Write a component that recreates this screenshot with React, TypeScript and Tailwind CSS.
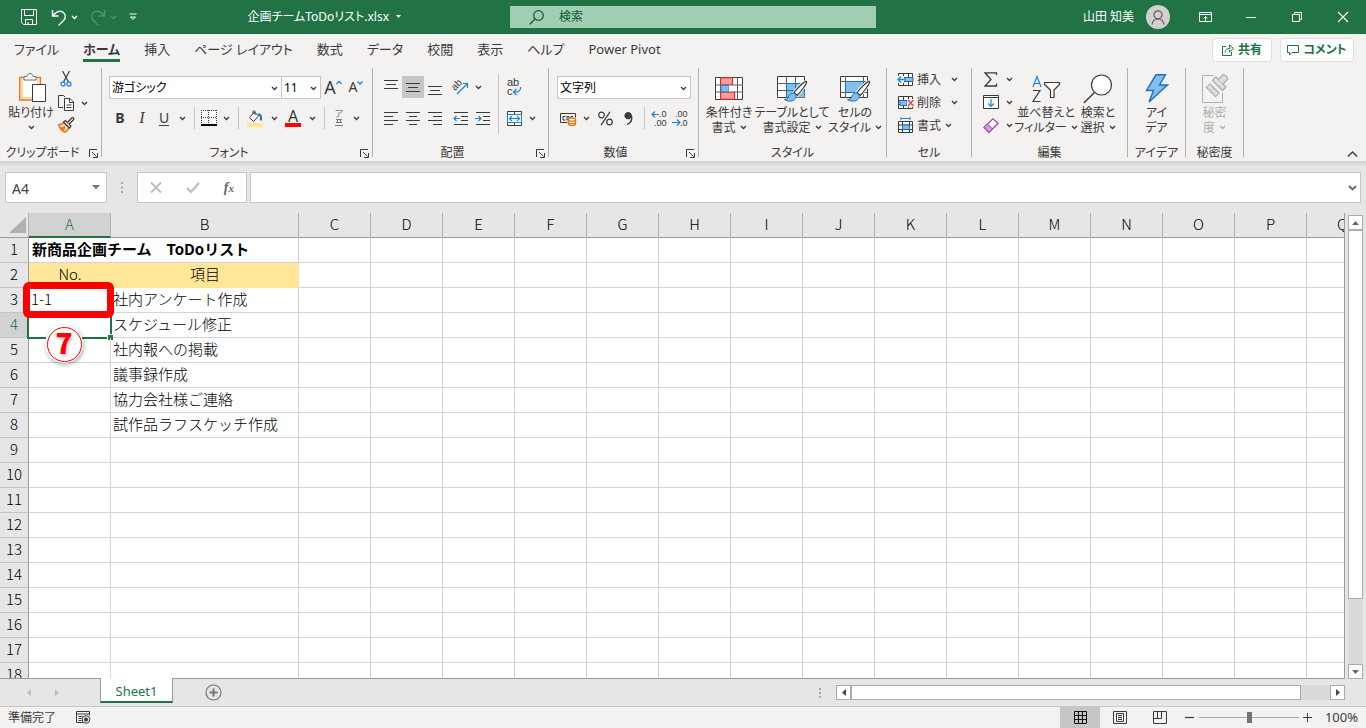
import React, { useState, ReactNode } from 'react';

interface CellRow {
  no: string;
  item: string;
}

const COLUMNS = ['A', 'B', 'C', 'D', 'E', 'F', 'G', 'H', 'I', 'J', 'K', 'L', 'M', 'N', 'O', 'P', 'Q'];

const TABS = ['ファイル', 'ホーム', '挿入', 'ページ レイアウト', '数式', 'データ', '校閲', '表示', 'ヘルプ', 'Power Pivot'];

const TASKS: CellRow[] = [
  { no: '1-1', item: '社内アンケート作成' },
  { no: '', item: 'スケジュール修正' },
  { no: '', item: '社内報への掲載' },
  { no: '', item: '議事録作成' },
  { no: '', item: '協力会社様ご連絡' },
  { no: '', item: '試作品ラフスケッチ作成' },
];

/* ---------- shared bits ---------- */

interface SvgProps {
  w: number;
  h: number;
  className?: string;
  children: ReactNode;
}

const Svg: React.FC<SvgProps> = ({ w, h, className = '', children }) => (
  <svg
    width={w}
    height={h}
    viewBox={`0 0 ${w} ${h}`}
    fill="none"
    stroke="#3b3a39"
    className={`shrink-0 overflow-visible font-['Liberation_Sans',sans-serif] ${className}`}
    aria-hidden="true"
  >
    {children}
  </svg>
);

const Chevron: React.FC<{ className?: string }> = ({ className = '' }) => (
  <svg width="7" height="5" viewBox="0 0 7 5" fill="none" stroke="currentColor" strokeWidth="1.3" className={`shrink-0 ${className}`} aria-hidden="true">
    <path d="M1 1l2.5 2.5L6 1" />
  </svg>
);

const ChevronButton: React.FC<{ label: string }> = ({ label }) => (
  <button type="button" aria-label={label} className="flex h-[22px] w-3.5 items-center justify-center">
    <Chevron />
  </button>
);

interface IconButtonProps {
  label: string;
  active?: boolean;
  className?: string;
  children: ReactNode;
}

const IconButton: React.FC<IconButtonProps> = ({ label, active, className = 'w-[22px]', children }) => (
  <button
    type="button"
    aria-label={label}
    className={`flex h-[22px] shrink-0 items-center justify-center ${active ? 'bg-[#c8c6c4]' : ''} ${className}`}
  >
    {children}
  </button>
);

const Divider = () => (
  <span className="flex w-2.5 justify-center">
    <span className="h-[22px] w-px bg-[#c8c6c4]" />
  </span>
);

interface GroupProps {
  label: string;
  className: string;
  launcher?: boolean;
  children: ReactNode;
}

const Group: React.FC<GroupProps> = ({ label, className, launcher, children }) => (
  <>
    <section aria-label={label} className={`flex shrink-0 flex-col ${className}`}>
      <div className="flex h-[75px]">{children}</div>
      <div className="relative flex h-[18px] items-center justify-center pt-0.5 whitespace-nowrap">
        <span className={launcher ? 'pr-4' : ''}>{label}</span>
        {launcher && (
          <button type="button" aria-label={`${label}の設定`} className="absolute right-[3px] top-1.5">
            <Svg w={9} h={9}>
              <path d="M.5 8V.5H8M3 3l4.5 4.5M8.500 4v4.500H4" />
            </Svg>
          </button>
        )}
      </div>
    </section>
    <div className="h-[89px] w-px shrink-0 bg-[#b3b0ad]" />
  </>
);

interface TallButtonProps {
  icon: ReactNode;
  lines: string[];
  chevron?: boolean;
  disabled?: boolean;
  className?: string;
}

const TallButton: React.FC<TallButtonProps> = ({ icon, lines, chevron, disabled, className = 'w-[60px]' }) => (
  <button
    type="button"
    disabled={disabled}
    className={`flex shrink-0 flex-col items-center pt-1 leading-[15px] whitespace-nowrap ${disabled ? 'text-[#b1afad]' : ''} ${className}`}
  >
    <span className="flex h-[33px] items-center">{icon}</span>
    {lines.map((line, i) => (
      <span key={i} className="flex h-[15px] items-center gap-1">
        {line}
        {chevron && i === lines.length - 1 && <Chevron />}
      </span>
    ))}
  </button>
);

interface ComboProps {
  label: string;
  value: string;
  className: string;
}

const Combo: React.FC<ComboProps> = ({ label, value, className }) => (
  <div className={`relative h-[23px] ${className}`}>
    <select aria-label={label} defaultValue={value} className="h-full w-full appearance-none border border-[#c8c6c4] bg-white pl-0.5 text-black">
      <option>{value}</option>
    </select>
    <Chevron className="pointer-events-none absolute right-1 top-2.5" />
  </div>
);

/* ---------- ribbon icons ---------- */

type LineSet = [number, number, number][];

const Lines: React.FC<{ rows: LineSet }> = ({ rows }) => (
  <Svg w={14} h={17}>
    {rows.map(([x1, x2, y], i) => (
      <path key={i} d={`M${x1} ${y}H${x2}`} />
    ))}
  </Svg>
);

const PasteIcon = () => (
  <Svg w={28} h={31}>
    <path d="M.8 4.500h20.500v22.500H.8z" fill="#fff" stroke="#e07b1f" strokeWidth="1.5" />
    <path d="M3 6.500h16.500v18.500H3z" stroke="#f9d9a0" strokeWidth="2" />
    <path d="M5 7V3.500h3C8 1.500 9.500.5 11 .5S14 1.500 14 3.500h3V7z" fill="#fafafa" stroke="#797775" />
    <path d="M13.500 11.500h13v17h-13z" fill="#fff" />
  </Svg>
);

const CutIcon = () => (
  <Svg w={12} h={16}>
    <path d="M2.500 0l6 11M9.500 0l-6 11" strokeWidth="1.2" />
    <circle cx="3" cy="13" r="2" stroke="#2b88d8" strokeWidth="1.3" />
    <circle cx="9" cy="13" r="2" stroke="#2b88d8" strokeWidth="1.3" />
  </Svg>
);

const CopyIcon = () => (
  <Svg w={17} h={16}>
    <path d="M5 12.500H.5V.5h5L7 2" />
    <path d="M6.500 3.500h5.500l3.500 3.500v8.500h-9z" fill="#fff" />
    <path d="M11.500 3.500v4h4M8.500 10h5M8.500 12.500h5" />
  </Svg>
);

const PainterIcon = () => (
  <Svg w={17} h={16}>
    <path d="M6 5.500C4.500 7 3 7.500.8 7.800 1.500 11 4 14 7.500 15.200 9.500 13.500 10.500 12 11 10.500z" fill="#fcd9b0" stroke="#e07b1f" strokeWidth="1.500" />
    <path d="M7 11.500c-.5 1.500-1.500 2.500-3 2l-2-3c2 0 4-1 5-2z" fill="#e07b1f" stroke="none" />
    <path d="M5.500 5L7.500 3.500 13 9l-1.500 2z" fill="#fff" strokeWidth="1.200" />
    <path d="M9.500 5.500L14 .8c1-.8 2.500.7 1.700 1.700L11.200 7" fill="#fff" strokeWidth="1.200" />
  </Svg>
);

const ConditionalIcon = () => (
  <Svg w={28} h={24}>
    <path d="M.5.5h27v22H.5z" fill="#fff" />
    <path d="M5.500.5v22M16.500.5v22M22.500.5v22M.5 8h27M.5 15h27" stroke="#605e5c" />
    <path d="M5.500.8h12v7h-12zM5.500 15.200h14v7h-14z" fill="#ff9a9a" stroke="#e3242b" />
    <path d="M6 8.300h8v6.500H6z" fill="#83beec" stroke="#2b7cd3" />
    <path d="M14 8.500h3v6h-3z" fill="#fff" stroke="none" />
  </Svg>
);

const Brush = () => (
  <>
    <path d="M30.500 7.500c-1.500-1-9 6.500-12.500 11l3.200 3C24.500 18 31.500 9 30.500 7.500z" fill="#fff" stroke="#f3f2f1" strokeWidth="3" />
    <path d="M30.500 7.500c-1.500-1-9 6.500-12.500 11l3.200 3C24.500 18 31.500 9 30.500 7.500z" fill="#fff" strokeWidth="1.200" />
    <path d="M17.500 19c-3 0-4.500 2-5 4-.5 1.800-2 2.300-4 2.500 3.500 2.500 9.500 2 11-1 .8-1.500 1-2.500.5-3.500z" fill="#83beec" stroke="#1b6fc0" />
  </>
);

const TableFormatIcon = () => (
  <Svg w={32} h={29}>
    <path d="M1.500 2.500h27v21h-27z" fill="#fff" />
    <path d="M10.500 9.500h18v14h-18z" fill="#83beec" stroke="none" />
    <path d="M10.500 2.500v21M19.500 2.500v21M1.500 9.500h27M1.500 16.500h27" stroke="#605e5c" />
    <path d="M10.500 23V9.500h18M10.500 16.500h18M19.500 9.500v14" stroke="#1b6fc0" />
    <Brush />
  </Svg>
);

const CellStyleIcon = () => (
  <Svg w={32} h={29}>
    <path d="M1.500 2.500h27v21h-27z" fill="#fff" />
    <path d="M6.500 2.500v21M1.500 7.500h27M1.500 18.500h27M24.500 2.500v21" stroke="#605e5c" />
    <path d="M6.500 7.500h18v11h-18z" fill="#83beec" stroke="#1b6fc0" />
    <Brush />
  </Svg>
);

const CellsBase = () => (
  <>
    <path d="M1.500 1.500h14v12h-14z" fill="#fff" />
    <path d="M6.500 1.500v12M11.500 1.500v12M1.500 5.500h14M1.500 9.500h14" />
  </>
);

const InsertCellsIcon = () => (
  <Svg w={18} h={15}>
    <CellsBase />
    <path d="M8 5.500h8v4H8z" fill="#83beec" stroke="#1b6fc0" />
    <path d="M0 4h7v7H0z" fill="#f3f2f1" stroke="none" />
    <path d="M8 7.500H1M4 4.500l-3 3 3 3" stroke="#1b87d8" strokeWidth="1.300" />
  </Svg>
);

const DeleteCellsIcon = () => (
  <Svg w={18} h={15}>
    <CellsBase />
    <path d="M3 5.500h7v5H3z" fill="#83beec" stroke="#1b6fc0" />
    <path d="M10 4h8v8h-8z" fill="#f3f2f1" stroke="none" />
    <path d="M11 5l5.500 6M16.500 5L11 11" stroke="#e8474c" strokeWidth="1.500" />
  </Svg>
);

const FormatCellsIcon = () => (
  <Svg w={18} h={17}>
    <path d="M1.500 4.500h14v11h-14z" fill="#fff" />
    <path d="M5.500 4.500v11M12.500 4.500v11M1.500 8h14M1.500 12.500h14" />
    <path d="M5.500 8h7v4.500h-7z" fill="#83beec" stroke="#1b6fc0" />
    <path d="M4 1.500h9M4 0v3M13 0v3" stroke="#1b87d8" />
  </Svg>
);

const SortFilterIcon = () => (
  <Svg w={28} h={28}>
    <path d="M1 12L5 1.500 9 12M2.500 8.500h5" stroke="#1b87d8" strokeWidth="1.200" />
    <path d="M1 15.500h7L1 26.500h7.500" strokeWidth="1.200" />
    <path d="M12.500 7.500h15v2l-5.500 5.500v7.500h-3.500V15l-6-5.500z" fill="#fff" strokeWidth="1.200" />
  </Svg>
);

const FindIcon = () => (
  <Svg w={30} h={30}>
    <circle cx="18.500" cy="11" r="10" fill="#fff" strokeWidth="1.200" />
    <path d="M11.500 18.500L.8 29" strokeWidth="1.400" />
  </Svg>
);

const IdeasIcon = () => (
  <Svg w={24} h={29}>
    <path d="M11 .8h9.500L14.500 11h8L4 28l4.500-11.500H1.500z" fill="#83beec" stroke="#1b6fc0" strokeWidth="1.400" />
  </Svg>
);

const SensitivityIcon = () => (
  <Svg w={28} h={30}>
    <path d="M13 1.500H1.500v27h20V19" stroke="#b1afad" />
    <path d="M5.500 13.500l3.500-3.500 9 9-3.500 3.500z" fill="#f3f2f1" stroke="#b1afad" strokeWidth="1.300" />
    <path d="M8 13.500l6.500 6.500M9.500 12l6.500 6.500" stroke="#b1afad" />
    <path d="M11.500 6.500L15 3l10 10-3.500 3.500z" fill="#e1dfdd" stroke="#b1afad" strokeWidth="1.300" />
    <path d="M17.500 5.500L22 .8c1.500-1 5.500 3 4.500 4.500L22 10" fill="#e1dfdd" stroke="#b1afad" strokeWidth="1.300" />
  </Svg>
);

/* ---------- title bar ---------- */

const TitleBar = () => (
  <header className="grid h-[34px] shrink-0 grid-cols-[minmax(0,1fr)_386px_minmax(0,1fr)] items-center bg-[#217346] text-white">
    <div className="flex items-center justify-between pl-[21px] pr-[88px]">
      <div className="flex items-center">
        <button type="button" aria-label="上書き保存" className="mr-3.5">
          <Svg w={16} h={16}>
            <path d="M.5.5h15v15h-13l-2-2zM3.500.5v6h9v-6M4.500 15.500v-5h7v5M7 15.500v-2.500" stroke="#fff" />
          </Svg>
        </button>
        <button type="button" aria-label="元に戻す" className="flex items-center gap-1">
          <Svg w={16} h={17}>
            <path d="M1.500 1v6h6M2 6.500C5 3 8.500.8 12 3.200c3 2.300 3 5.500.5 8.300l-5 5" stroke="#fff" strokeWidth="1.400" />
          </Svg>
          <Chevron />
        </button>
        <button type="button" aria-label="やり直し" disabled className="ml-3 flex items-center gap-1 text-[#4f936c]">
          <Svg w={16} h={17}>
            <path d="M14.500 1v6h-6M14 6.500C11 3 7.500.8 4 3.200c-3 2.300-3 5.500-.5 8.300l5 5" stroke="#4f936c" strokeWidth="1.400" />
          </Svg>
          <Chevron />
        </button>
        <button type="button" aria-label="クイック アクセスのカスタマイズ" className="ml-3">
          <Svg w={8} h={8}>
            <path d="M.5 1h7M1.500 4l2.500 2.500L6.500 4z" stroke="#fff" />
          </Svg>
        </button>
      </div>
      <button type="button" className="flex items-center gap-1.5 text-xs whitespace-nowrap">
        企画チームToDoリスト.xlsx
        <Svg w={7} h={4}>
          <path d="M1 0h5L3.500 3z" fill="#fff" stroke="none" />
        </Svg>
      </button>
    </div>
    <label className="ml-5 flex h-[22px] items-center gap-[15px] bg-[#a0cdb4] pl-[19px]">
      <Svg w={15} h={15}>
        <circle cx="9.500" cy="5.500" r="4.800" stroke="#0e5c2f" strokeWidth="1.200" />
        <path d="M6 9L.8 14.200" stroke="#0e5c2f" strokeWidth="1.300" />
      </Svg>
      <input type="search" aria-label="検索" placeholder="検索" className="min-w-0 flex-1 bg-transparent pb-px text-xs outline-none placeholder:text-[#0e5c2f]" />
    </label>
    <div className="flex items-center justify-end">
      <span className="mr-3 text-xs">山田 知美</span>
      <button type="button" aria-label="アカウント" className="mr-3 flex size-6 items-center justify-center rounded-full bg-[#d2d0ce]">
        <Svg w={14} h={15}>
          <circle cx="7" cy="4.800" r="4" stroke="#605e5c" strokeWidth="1.200" />
          <path d="M1 14.500c.5-3.500 3-5.500 6-5.500s5.500 2 6 5.500" stroke="#605e5c" strokeWidth="1.200" />
        </Svg>
      </button>
      <button type="button" aria-label="リボンの表示オプション" className="flex h-[34px] w-[46px] items-center justify-center">
        <Svg w={13} h={10}>
          <path d="M.5.5h12v9H.5zM.5 2.500h12M6.500 9V4.500M4.500 6.500l2-2 2 2" stroke="#fff" />
        </Svg>
      </button>
      <button type="button" aria-label="最小化" className="flex h-[34px] w-[46px] items-center justify-center">
        <span className="h-px w-2.5 bg-white" />
      </button>
      <button type="button" aria-label="元に戻す (縮小)" className="flex h-[34px] w-[46px] items-center justify-center">
        <Svg w={10} h={10}>
          <path d="M.5 2.500h7v7h-7zM2.500 2.500v-2h7v7h-2" stroke="#fff" />
        </Svg>
      </button>
      <button type="button" aria-label="閉じる" className="flex h-[34px] w-[46px] items-center justify-center">
        <Svg w={10} h={10}>
          <path d="M0 0l10 10M10 0L0 10" stroke="#fff" strokeWidth="1.100" />
        </Svg>
      </button>
    </div>
  </header>
);

const TabBar = () => {
  const [active, setActive] = useState('ホーム');

  return (
    <nav className="flex h-8 shrink-0 items-center justify-between pr-3 pl-0.5">
      <div className="flex h-full text-[13px] leading-[18px] whitespace-nowrap">
        {TABS.map(tab => (
          <button
            key={tab}
            type="button"
            onClick={() => setActive(tab)}
            className={`flex flex-col items-center px-3 pt-1.5 ${tab === active ? 'font-bold' : ''}`}
          >
            <span className={`border-b-3 pb-px ${tab === active ? 'border-[#217346]' : 'border-transparent'}`}>{tab}</span>
          </button>
        ))}
      </div>
      <div className="flex gap-2 text-xs font-bold text-[#217346]">
        <button type="button" className="flex h-6 w-[60px] items-center justify-center gap-1 rounded-sm border border-[#e1dfdd] bg-white">
          <Svg w={12} h={12}>
            <path d="M4 2.500H.5v9h9V8M3 8.500c0-3 2-4 5-4M7.500 1v2C8 3 8 3 8 4.500M7.500.8l4 3.700-4 3.500V6" stroke="#217346" />
          </Svg>
          共有
        </button>
        <button type="button" className="flex h-6 w-[74px] items-center justify-center gap-1 rounded-sm border border-[#e1dfdd] bg-white">
          <Svg w={12} h={11}>
            <path d="M.5.5h11v7H5L2.500 10V7.500h-2z" stroke="#217346" />
          </Svg>
          コメント
        </button>
      </div>
    </nav>
  );
};

/* ---------- ribbon ---------- */

const Ribbon = () => (
  <div className="flex h-[95px] shrink-0 pt-0.5 text-xs">
    <Group label="クリップボード" className="w-[101px]" launcher>
      <button type="button" className="ml-1 flex w-[54px] flex-col items-center pt-1 whitespace-nowrap">
        <span className="flex h-[33px] items-center pl-1"><PasteIcon /></span>
        <span className="leading-[15px]">貼り付け</span>
        <span className="flex h-[15px] items-center"><Chevron /></span>
      </button>
      <div className="-ml-[3px] flex flex-col">
        <IconButton label="切り取り"><CutIcon /></IconButton>
        <div className="mt-0.5 flex">
          <IconButton label="コピー"><CopyIcon /></IconButton>
          <ChevronButton label="コピーのオプション" />
        </div>
        <IconButton label="書式のコピー/貼り付け"><PainterIcon /></IconButton>
      </div>
    </Group>

    <Group label="フォント" className="w-[270px]" launcher>
      <div className="flex flex-col gap-2 pl-[7px] pt-2">
        <div className="flex">
          <Combo label="フォント名" value="游ゴシック" className="w-[173px]" />
          <Combo label="フォント サイズ" value="11" className="-ml-px w-10" />
          <IconButton label="フォント サイズの拡大" className="w-6 text-lg">
            A<Svg w={6} h={14}><path d="M.5 4L3 1.500 5.500 4" stroke="#1b87d8" strokeWidth="1.300" /></Svg>
          </IconButton>
          <IconButton label="フォント サイズの縮小" className="w-[22px] text-sm">
            A<Svg w={6} h={14}><path d="M.5 1.500L3 4l2.500-2.500" stroke="#1b87d8" strokeWidth="1.300" /></Svg>
          </IconButton>
        </div>
        <div className="flex items-center">
          <IconButton label="太字"><b className="text-sm">B</b></IconButton>
          <IconButton label="斜体"><i className="font-['Liberation_Serif',serif] text-base">I</i></IconButton>
          <IconButton label="下線"><u className="text-sm underline-offset-2">U</u></IconButton>
          <ChevronButton label="下線のオプション" />
          <Divider />
          <IconButton label="罫線" className="w-5">
            <Svg w={16} h={16}>
              <path d="M0 0h16v14H0z" fill="#fff" stroke="none" />
              <path d="M0 .5h16M0 7.500h16M.5 0v14M7.500 0v14M15.500 0v14" strokeDasharray="1 1" />
              <path d="M0 15h16" stroke="#000" strokeWidth="2" />
            </Svg>
          </IconButton>
          <ChevronButton label="罫線のオプション" />
          <Divider />
          <IconButton label="塗りつぶしの色" className="w-6">
            <Svg w={16} h={17}>
              <path d="M7.500 2L2.500 7.500l4 4 5-5.500zM6 4V1.500c0-1 2-1 2 0V5" fill="#fff" />
              <path d="M11 4.500c2.500-.5 3.500 1.500 2.800 6" stroke="#1b6fc0" strokeWidth="2" />
              <path d="M0 13h16v4H0z" fill="#ffe699" stroke="none" />
            </Svg>
          </IconButton>
          <ChevronButton label="塗りつぶしの色のオプション" />
          <IconButton label="フォントの色" className="w-6">
            <span className="h-[18px] w-4 border-b-4 border-[#ff0000] text-base leading-[14px]">A</span>
          </IconButton>
          <ChevronButton label="フォントの色のオプション" />
          <Divider />
          <IconButton label="ふりがなの表示" className="w-5">
            <span className="flex flex-col items-center text-[9px] leading-[10px] text-[#797775]">
              ア
              <Svg w={8} h={8}><path d="M1 .5h6M1 3.500h6M0 6.500h8M2.500 0v4M5.500 0v4" stroke="#797775" /></Svg>
            </span>
          </IconButton>
          <ChevronButton label="ふりがなのオプション" />
        </div>
      </div>
    </Group>

    <Group label="配置" className="w-[175px]" launcher>
      <div className="flex flex-col gap-[9px] pl-[7px] pt-2">
        <div className="flex">
          <IconButton label="上揃え"><Lines rows={[[0, 14, 1.5], [2, 12, 5.5], [0, 14, 9.5]]} /></IconButton>
          <IconButton label="上下中央揃え" active><Lines rows={[[0, 14, 4.5], [2, 12, 8.5], [0, 14, 12.5]]} /></IconButton>
          <IconButton label="下揃え"><Lines rows={[[0, 14, 7.5], [2, 12, 11.5], [0, 14, 15.5]]} /></IconButton>
          <IconButton label="方向" className="ml-[3px] w-[22px]">
            <Svg w={17} h={16}>
              <text x="0" y="9" transform="rotate(-45 5 7)" fontSize="10" fill="#3b3a39" stroke="none">ab</text>
              <path d="M5 15L15.500 4.500M11 4.500h4.500V9" stroke="#1b87d8" strokeWidth="1.200" />
            </Svg>
          </IconButton>
          <ChevronButton label="方向のオプション" />
        </div>
        <div className="flex">
          <IconButton label="左揃え"><Lines rows={[[0, 14, 2.5], [0, 9, 6.5], [0, 14, 10.5], [0, 9, 14.5]]} /></IconButton>
          <IconButton label="中央揃え"><Lines rows={[[0, 14, 2.5], [3, 11, 6.5], [0, 14, 10.5], [3, 11, 14.5]]} /></IconButton>
          <IconButton label="右揃え"><Lines rows={[[0, 14, 2.5], [5, 14, 6.5], [0, 14, 10.5], [5, 14, 14.5]]} /></IconButton>
          <IconButton label="インデントを減らす" className="ml-[3px] w-[22px]">
            <Svg w={15} h={15}>
              <path d="M1 1.500h14M8 5.500h7M8 9.500h7M1 13.500h14" />
              <path d="M7 7.500H1M3.500 5L1 7.500 3.500 10" stroke="#1b87d8" strokeWidth="1.200" />
            </Svg>
          </IconButton>
          <IconButton label="インデントを増やす">
            <Svg w={15} h={15}>
              <path d="M1 1.500h14M8 5.500h7M8 9.500h7M1 13.500h14" />
              <path d="M0 7.500h6M3.500 5L6 7.500 3.500 10" stroke="#1b87d8" strokeWidth="1.200" />
            </Svg>
          </IconButton>
        </div>
      </div>
      <div className="ml-[5px] mt-1.5 h-[60px] w-px bg-[#c8c6c4]" />
      <div className="flex flex-col gap-[9px] pl-1 pt-2">
        <IconButton label="折り返して全体を表示する">
          <Svg w={16} h={18}>
            <text x="1" y="8" fontSize="11" fill="#3b3a39" stroke="none">ab</text>
            <text x="1" y="17" fontSize="11" fill="#3b3a39" stroke="none">c</text>
            <path d="M14.500 9c.5 3-1 5-6.500 5M10.500 11l-3 3 3 3" stroke="#1b87d8" strokeWidth="1.300" />
          </Svg>
        </IconButton>
        <div className="flex">
          <IconButton label="セルを結合して中央揃え">
            <Svg w={15} h={15}>
              <path d="M.5.5h14v14H.5zM7.500 0v15" fill="#fff" />
              <path d="M.5 3.500h14v8H.5z" fill="#fff" stroke="#1b87d8" />
              <path d="M2.500 7.500h10M5 5L2.500 7.500 5 10M10 5l2.500 2.500L10 10" stroke="#1b87d8" strokeWidth="1.200" />
            </Svg>
          </IconButton>
          <ChevronButton label="結合のオプション" />
        </div>
      </div>
    </Group>

    <Group label="数値" className="w-[149px]" launcher>
      <div className="flex flex-col gap-2 pl-2 pt-2">
        <Combo label="表示形式" value="文字列" className="w-[134px]" />
        <div className="flex items-center">
          <IconButton label="通貨表示形式">
            <Svg w={17} h={15}>
              <path d="M7.500 11.500h-7v-9h15v4" />
              <path d="M5.500 5.500H3v3.500h2.500M7 5.500h2V9H7zM13 5.500h-2V7" />
              <path d="M8.500 8.500v4.500c0 2 7 2 7 0V8.500c0-2-7-2-7 0zM8.500 9c0 1.500 7 1.500 7 0M8.500 11.500c0 1.500 7 1.500 7 0" fill="#fff" stroke="#e07b1f" strokeWidth="1.300" />
            </Svg>
          </IconButton>
          <ChevronButton label="通貨のオプション" />
          <IconButton label="パーセント スタイル" className="w-6">
            <Svg w={15} h={15}>
              <circle cx="3.500" cy="4" r="2.800" strokeWidth="1.200" />
              <circle cx="11.500" cy="11" r="2.800" strokeWidth="1.200" />
              <path d="M12 .8L3 14.200" strokeWidth="1.200" />
            </Svg>
          </IconButton>
          <IconButton label="桁区切りスタイル">
            <Svg w={8} h={13}>
              <path d="M4 .5a3.200 3.200 0 103 4.500c.8 3-.8 6-4 7.500 5-1.500 5.500-5 4.500-9A3.400 3.400 0 004 .5z" fill="#3b3a39" />
            </Svg>
          </IconButton>
          <Divider />
          <IconButton label="小数点以下の表示桁数を増やす" className="w-5">
            <Svg w={16} h={16}>
              <text x="8" y="7" fontSize="9" fill="#3b3a39" stroke="none">.0</text>
              <text x="3" y="16" fontSize="9" fill="#3b3a39" stroke="none">.00</text>
              <path d="M8 4.500H1M4 1.500l-3 3 3 3" stroke="#1b87d8" strokeWidth="1.200" />
            </Svg>
          </IconButton>
          <IconButton label="小数点以下の表示桁数を減らす">
            <Svg w={16} h={16}>
              <text x="3" y="7" fontSize="9" fill="#3b3a39" stroke="none">.00</text>
              <text x="8" y="16" fontSize="9" fill="#3b3a39" stroke="none">.0</text>
              <path d="M0 12.500h8M5 9.500l3 3-3 3" stroke="#1b87d8" strokeWidth="1.200" />
            </Svg>
          </IconButton>
        </div>
      </div>
    </Group>

    <Group label="スタイル" className="w-[187px]">
      <div className="flex pl-0.5">
        <TallButton icon={<ConditionalIcon />} lines={['条件付き', '書式']} chevron className="w-14" />
        <TallButton icon={<TableFormatIcon />} lines={['テーブルとして', '書式設定']} chevron className="w-[70px]" />
        <TallButton icon={<CellStyleIcon />} lines={['セルの', 'スタイル']} chevron className="w-14" />
      </div>
    </Group>

    <Group label="セル" className="w-[84px]">
      <div className="flex flex-col pl-2.5">
        <button type="button" className="flex h-[23px] items-center gap-0.5">
          <InsertCellsIcon />挿入<Chevron className="ml-2" />
        </button>
        <button type="button" className="flex h-[23px] items-center gap-0.5">
          <DeleteCellsIcon />削除<Chevron className="ml-2" />
        </button>
        <button type="button" className="flex h-[23px] items-center gap-0.5">
          <FormatCellsIcon />書式<Chevron className="ml-0.5" />
        </button>
      </div>
    </Group>

    <Group label="編集" className="w-[155px]">
      <div className="flex flex-col gap-px pl-2">
        <div className="flex">
          <IconButton label="合計">
            <Svg w={14} h={15}>
              <path d="M12.500 3V.8H1L7 7.500 1 14h11.500v-2.500" strokeWidth="1.300" />
            </Svg>
          </IconButton>
          <ChevronButton label="合計のオプション" />
        </div>
        <div className="flex">
          <IconButton label="フィル">
            <Svg w={16} h={14}>
              <path d="M.5.5h15v13H.5z" fill="#fff" />
              <path d="M.5 2.500h15" />
              <path d="M8 4v7.500M5 8.500l3 3 3-3" stroke="#1b87d8" strokeWidth="1.200" />
            </Svg>
          </IconButton>
          <ChevronButton label="フィルのオプション" />
        </div>
        <div className="flex">
          <IconButton label="クリア">
            <Svg w={16} h={15}>
              <path d="M1 9.500l9-8.700 5 4.700-9 8.800z" fill="#fff" stroke="#a33fb5" strokeWidth="1.200" />
              <path d="M1 9.500L4.500 6l5 5L6 14.300z" fill="#d59ddd" stroke="#a33fb5" />
            </Svg>
          </IconButton>
          <ChevronButton label="クリアのオプション" />
        </div>
      </div>
      <TallButton icon={<SortFilterIcon />} lines={['並べ替えと', 'フィルター']} chevron />
      <TallButton icon={<FindIcon />} lines={['検索と', '選択']} chevron className="w-11" />
    </Group>

    <Group label="アイデア" className="w-[57px]">
      <TallButton icon={<IdeasIcon />} lines={['アイ', 'デア']} className="w-full" />
    </Group>

    <Group label="秘密度" className="w-[57px]">
      <TallButton icon={<SensitivityIcon />} lines={['秘密', '度']} chevron disabled className="w-full" />
    </Group>

    <div className="flex flex-1 items-end justify-end pb-1 pr-2">
      <button type="button" aria-label="リボンを折りたたむ">
        <Svg w={11} h={6}>
          <path d="M.8 5.500l4.700-4.500 4.700 4.500" strokeWidth="1.300" />
        </Svg>
      </button>
    </div>
  </div>
);

/* ---------- formula bar ---------- */

const FormulaBar = () => (
  <div className="flex h-[52px] shrink-0 bg-linear-to-b from-[#cfcfcf] to-[#e6e6e6] to-10% px-[5px] pt-[11px] text-[#444]">
    <div className="flex h-[31px] w-[102px] items-center justify-between border border-[#c6c6c6] bg-white pl-1.5 pr-1.5">
      <input aria-label="名前ボックス" defaultValue="A4" className="w-16 bg-transparent pt-0.5 text-sm outline-none" />
      <Svg w={8} h={5}><path d="M0 0h8L4 4.500z" fill="#777" stroke="none" /></Svg>
    </div>
    <div className="flex h-[31px] w-[30px] items-center justify-center">
      <Svg w={2} h={11}><path d="M1 0v11" stroke="#a6a6a6" strokeWidth="2" strokeDasharray="2 2.500" /></Svg>
    </div>
    <div className="flex h-[31px] w-[110px] items-center justify-around border border-[#c6c6c6] bg-white">
      <button type="button" aria-label="キャンセル">
        <Svg w={12} h={11}><path d="M1 .5l10 10M11 .5l-10 10" stroke="#bdbdbd" strokeWidth="1.800" /></Svg>
      </button>
      <button type="button" aria-label="入力">
        <Svg w={14} h={11}><path d="M1 6l4 4L13 1" stroke="#bdbdbd" strokeWidth="2.200" /></Svg>
      </button>
      <button type="button" aria-label="関数の挿入" className="font-['Liberation_Serif',serif] text-sm leading-4 font-bold text-[#666] italic">
        f<span className="text-[11px]">x</span>
      </button>
    </div>
    <div className="ml-[3px] flex h-[31px] flex-1 items-center border border-[#c6c6c6] bg-white pr-[3px]">
      <input aria-label="数式バー" className="h-full flex-1 bg-transparent px-1 text-sm outline-none" />
      <Svg w={9} h={6}><path d="M1 1l3.500 3.500L8 1" stroke="#666" strokeWidth="1.800" /></Svg>
    </div>
  </div>
);

/* ---------- sheet ---------- */

const rowHeader = 'border-r border-b border-r-[#9b9b9b] border-b-[#c4c4c4] p-0 pb-0.5 font-light';
const cell = 'border-r border-b border-[#d4d4d4] p-0 pb-0.5';

const BlankCells: React.FC<{ from: number }> = ({ from }) => (
  <>
    {COLUMNS.slice(from).map(col => (
      <td key={col} className={cell} />
    ))}
  </>
);

const Sheet = () => (
  <div className="min-w-0 flex-1 overflow-hidden border-r border-b border-[#9b9b9b] bg-white">
    <table className="w-[1379px] table-fixed border-separate border-spacing-0 font-['Noto_Sans_CJK_JP',sans-serif] text-[15px] leading-5 font-light whitespace-nowrap text-black">
      <colgroup>
        <col className="w-[29px]" />
        <col className="w-[82px]" />
        <col className="w-[188px]" />
        {COLUMNS.slice(2).map(col => (
          <col key={col} className="w-[72px]" />
        ))}
      </colgroup>
      <thead>
        <tr className="h-[25px] bg-[#e6e6e6]">
          <td className="border-r border-b border-r-[#b1b1b1] border-b-[#9b9b9b] p-0">
            <Svg w={17} h={16} className="ml-auto mr-0.5"><path d="M17 0v16H0z" fill="#b1b1b1" stroke="none" /></Svg>
          </td>
          {COLUMNS.map(col => (
            <th
              key={col}
              scope="col"
              className={`border-r p-0 pb-0.5 font-light ${
                col === 'A' ? 'border-b-2 border-r-[#b1b1b1] border-b-[#217346] bg-[#d2d2d2] text-[#217346]' : 'border-b border-r-[#b1b1b1] border-b-[#9b9b9b]'
              }`}
            >
              {col}
            </th>
          ))}
        </tr>
      </thead>
      <tbody>
        <tr className="h-[25px]">
          <th scope="row" className={`${rowHeader} bg-[#e6e6e6]`}>1</th>
          <td colSpan={2} className={`${cell} pl-[3px] font-bold`}>新商品企画チーム　ToDoリスト</td>
          <BlankCells from={2} />
        </tr>
        <tr className="h-[25px]">
          <th scope="row" className={`${rowHeader} bg-[#e6e6e6]`}>2</th>
          <td className="border-b border-[#ffe699] bg-[#ffe699] p-0 pb-0.5 text-center">No.</td>
          <td className="border-b border-[#ffe699] bg-[#ffe699] p-0 pb-0.5 text-center">項目</td>
          <BlankCells from={2} />
        </tr>
        {TASKS.map((task, i) => (
          <tr key={task.item} className="h-[25px]">
            <th scope="row" className={`${rowHeader} ${i === 1 ? 'bg-[#d2d2d2] text-[#217346]' : 'bg-[#e6e6e6]'}`}>{i + 3}</th>
            <td className={`${cell} relative pl-0.5`}>
              {task.no}
              {i === 0 && <span className="absolute -inset-y-1.5 -left-1.5 -right-1 z-10 rounded-md border-7 border-[#ff0000]" />}
              {i === 1 && (
                <>
                  <span className="absolute -inset-0.5 border-2 border-[#217346]" />
                  <span className="absolute -right-[3px] -bottom-[3px] size-1.5 border-t border-l border-white bg-[#217346]" />
                  <span className="absolute top-3 left-4 z-20 flex size-[38px] items-center justify-center rounded-full bg-white shadow-[1px_2px_4px_rgba(0,0,0,0.3)]">
                    <span className="flex size-[35px] items-center justify-center rounded-full border border-[#ff0000] pb-1 text-[28px] leading-none font-black text-[#ff0000] [text-shadow:1px_2px_3px_rgba(0,0,0,0.25)]">
                      7
                    </span>
                  </span>
                </>
              )}
            </td>
            <td className={`${cell} pl-0.5`}>{task.item}</td>
            <BlankCells from={2} />
          </tr>
        ))}
        {Array.from({ length: 10 }, (_, i) => (
          <tr key={i} className="h-[25px]">
            <th scope="row" className={`${rowHeader} bg-[#e6e6e6]`}>{i + 9}</th>
            <BlankCells from={0} />
          </tr>
        ))}
      </tbody>
    </table>
  </div>
);

const scrollButton = 'flex size-[15px] shrink-0 items-center justify-center border border-[#ababab] bg-white';

const VerticalScroll = () => (
  <div className="ml-[3px] mr-[3px] mt-0.5 flex w-[15px] shrink-0 flex-col bg-[#dadada]">
    <button type="button" aria-label="上へスクロール" className={scrollButton}>
      <Svg w={7} h={4}><path d="M0 4h7L3.500 0z" fill="#666" stroke="none" /></Svg>
    </button>
    <div className="flex-1">
      <div className="h-[85%] border border-[#ababab] bg-white" />
    </div>
    <button type="button" aria-label="下へスクロール" className={scrollButton}>
      <Svg w={7} h={4}><path d="M0 0h7L3.500 4z" fill="#666" stroke="none" /></Svg>
    </button>
  </div>
);

const SheetTabs = () => (
  <div className="flex h-[27px] shrink-0 items-start bg-[#e6e6e6] pr-[21px]">
    <div className="flex h-[26px] w-[100px] shrink-0 items-center gap-6 pl-[27px]">
      <button type="button" aria-label="前のシート">
        <Svg w={4} h={7}><path d="M4 0v7L0 3.500z" fill="#bdbdbd" stroke="none" /></Svg>
      </button>
      <button type="button" aria-label="次のシート">
        <Svg w={4} h={7}><path d="M0 0v7l4-3.500z" fill="#bdbdbd" stroke="none" /></Svg>
      </button>
    </div>
    <button type="button" className="relative -mt-px h-[25px] w-[73px] border-x border-b-2 border-x-[#9b9b9b] border-b-[#217346] bg-white pt-1 text-[13px] text-[#217346]">
      Sheet1
    </button>
    <button type="button" aria-label="新しいシート" className="ml-8 mt-[5px]">
      <Svg w={17} h={17}>
        <circle cx="8.500" cy="8.500" r="7.500" stroke="#777" strokeWidth="1.200" />
        <path d="M8.500 4.500v8M4.500 8.500h8" stroke="#777" strokeWidth="2" />
      </Svg>
    </button>
    <div className="ml-auto flex items-center pt-1.5">
      <Svg w={2} h={10} className="mr-[15px]"><path d="M1 0v10" stroke="#a6a6a6" strokeWidth="2" strokeDasharray="2 2" /></Svg>
      <div className="flex w-[509px] bg-[#dadada]">
        <button type="button" aria-label="左へスクロール" className={scrollButton}>
          <Svg w={4} h={7}><path d="M4 0v7L0 3.500z" fill="#444" stroke="none" /></Svg>
        </button>
        <div className="flex-1">
          <div className="h-full w-[94%] border border-[#ababab] bg-white" />
        </div>
        <button type="button" aria-label="右へスクロール" className={scrollButton}>
          <Svg w={4} h={7}><path d="M0 0v7l4-3.500z" fill="#444" stroke="none" /></Svg>
        </button>
      </div>
    </div>
  </div>
);

/* ---------- status bar ---------- */

const StatusBar = () => {
  const [zoom, setZoom] = useState(100);

  return (
    <footer className="flex h-[22px] shrink-0 items-center justify-between border-t border-[#c6c6c6] pl-2 pr-2 text-xs">
      <div className="flex items-center gap-5">
        <span>準備完了</span>
        <button type="button" aria-label="マクロの記録">
          <Svg w={14} h={13}>
            <path d="M7 11.500H.5V.5h13v4M.5 3h13M2.500 5.500h4M2.500 7.500h3M2.500 9.500h3" />
            <circle cx="10" cy="8.500" r="3.800" fill="#f3f2f1" />
            <circle cx="10" cy="8.500" r="1.600" fill="#3b3a39" />
          </Svg>
        </button>
      </div>
      <div className="flex h-full items-center">
        <button type="button" aria-label="標準" className="flex h-full w-10 items-center justify-center bg-[#c8c6c4]">
          <Svg w={13} h={13}><path d="M.5.5h12v12H.5zM4.500 0v13M8.500 0v13M0 4.500h13M0 8.500h13" stroke="#111" /></Svg>
        </button>
        <button type="button" aria-label="ページ レイアウト表示" className="flex h-full w-10 items-center justify-center">
          <Svg w={14} h={13}><path d="M.5.5h13v12H.5zM3.500 2.500h7v8h-7zM5 4.500h4M5 6.500h4M5 8.500h4" /></Svg>
        </button>
        <button type="button" aria-label="改ページ プレビュー" className="flex h-full w-10 items-center justify-center">
          <Svg w={14} h={13}><path d="M.5.5h13v12H.5zM4.500.5v7M8.500.5v7M.5 7.500h8" /></Svg>
        </button>
        <button type="button" aria-label="縮小" onClick={() => setZoom(zoom - 10)} className="ml-[5px] mr-[5px] flex h-full items-center">
          <Svg w={9} h={9}><path d="M0 4.500h9" strokeWidth="1.200" /></Svg>
        </button>
        <input
          type="range"
          aria-label="ズーム"
          min={0}
          max={200}
          value={zoom}
          onChange={e => setZoom(Number(e.target.value))}
          className="h-[11px] w-[100px] appearance-none bg-linear-to-r from-[#ababab] to-[#ababab] bg-[length:100%_1px] bg-center bg-no-repeat [&::-webkit-slider-thumb]:h-[11px] [&::-webkit-slider-thumb]:w-[5px] [&::-webkit-slider-thumb]:appearance-none [&::-webkit-slider-thumb]:bg-[#767472]"
        />
        <button type="button" aria-label="拡大" onClick={() => setZoom(zoom + 10)} className="ml-1 flex h-full items-center">
          <Svg w={9} h={9}><path d="M0 4.500h9M4.500 0v9" /></Svg>
        </button>
        <span className="w-[46px] text-right text-[13px]">{zoom}%</span>
      </div>
    </footer>
  );
};

const App = () => (
  <div className="flex h-screen flex-col overflow-hidden bg-[#f3f2f1] font-['Noto_Sans','Noto_Sans_CJK_JP',sans-serif] text-[#3b3a39] [font-feature-settings:'palt']">
    <TitleBar />
    <TabBar />
    <Ribbon />
    <FormulaBar />
    <main className="flex min-h-0 flex-1 bg-[#e6e6e6] [font-feature-settings:normal]">
      <Sheet />
      <VerticalScroll />
    </main>
    <SheetTabs />
    <StatusBar />
  </div>
);

export default App;
